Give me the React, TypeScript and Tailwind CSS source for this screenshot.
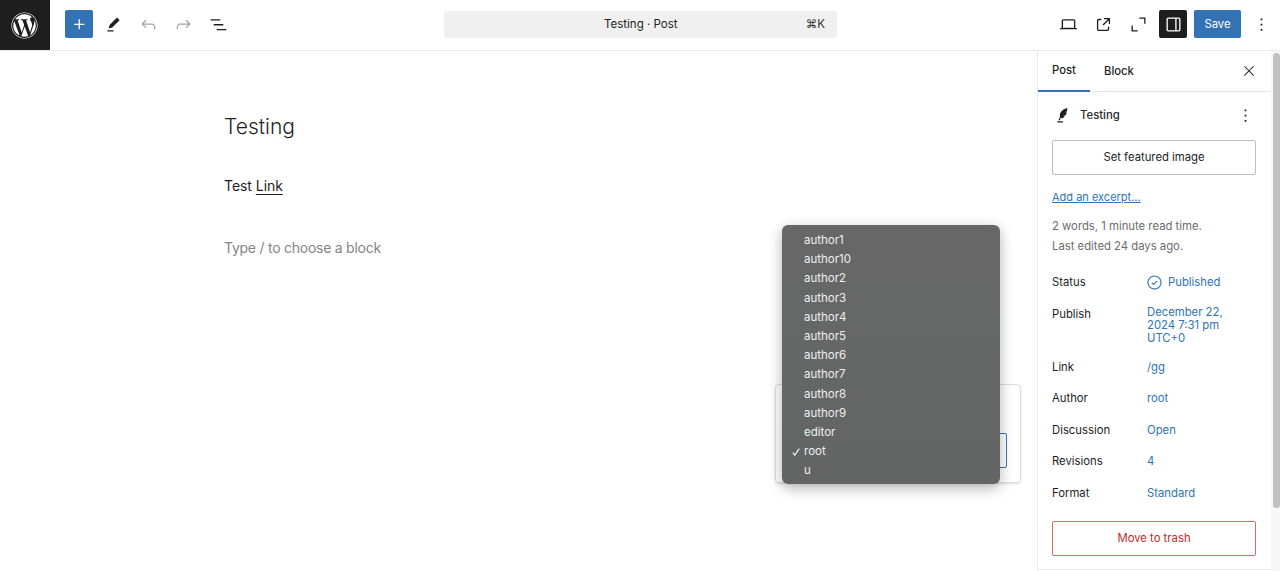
import React from "react";
import { FaWordpress } from "react-icons/fa";

const Icon = ({ d, className = "" }: { d: string; className?: string }) => (
  <svg viewBox="0 0 24 24" fill="currentColor" className={`h-[21px] w-[21px] shrink-0 ${className}`}>
    <path d={d} fillRule="evenodd" />
  </svg>
);

const P = {
  plus: "M11 12.5V17.5H12.5V12.5H17.5V11H12.5V6H11V11H6V12.5H11Z",
  edit: "m19 7-3-3-8.5 8.5-1 4 4-1L19 7Zm-7 11.5H5V20h7v-1.5Z",
  undo: "M18.3 11.7c-.6-.6-1.4-.9-2.3-.9H6.7l2.9-3.3-1.1-1-4.5 5L8.5 16l1-1-2.7-2.7H16c.5 0 .9.2 1.3.5 1 1 1 3.4 1 4.5v.3h1.5v-.2c0-1.5 0-4.3-1.5-5.7z",
  redo: "M15.6 6.5l-1.1 1 2.9 3.3H8c-.9 0-1.7.3-2.3.9-1.4 1.5-1.4 4.2-1.4 5.6v.2h1.5v-.3c0-1.1 0-3.5 1-4.5.3-.3.7-.5 1.3-.5h9.2L14.5 15l1.1 1.1 4.6-4.6-4.6-5z",
  list: "M3 6h11v1.5H3V6Zm3.5 5.5h11V13h-11v-1.5ZM21 17H10v1.5h11V17Z",
  desktop: "M20.5 16h-.7V8c0-1.1-.9-2-2-2H6.2c-1.1 0-2 .9-2 2v8h-.7c-.8 0-1.5.7-1.5 1.5h20c0-.8-.7-1.5-1.5-1.5zM5.7 8c0-.3.2-.5.5-.5h11.6c.3 0 .5.2.5.5v7.6H5.7V8z",
  external: "M19.5 4.5h-7V6h4.44l-5.97 5.97 1.06 1.06L18 7.06v4.44h1.5v-7Zm-13 1a2 2 0 0 0-2 2v10a2 2 0 0 0 2 2h10a2 2 0 0 0 2-2v-3H17v3a.5.5 0 0 1-.5.5h-10a.5.5 0 0 1-.5-.5v-10a.5.5 0 0 1 .5-.5h3V5.5h-3Z",
  full: "M13 5.5h5.5V11H20V4h-7v1.5Zm-2 13H5.5V13H4v7h7v-1.5Z",
  drawer: "M18 4H6c-1.1 0-2 .9-2 2v12c0 1.1.9 2 2 2h12c1.1 0 2-.9 2-2V6c0-1.1-.9-2-2-2zm-4 14.5H6c-.3 0-.5-.2-.5-.5V6c0-.3.2-.5.5-.5h8v13zm4.5-.5c0 .3-.2.5-.5.5h-2.5v-13H18c.3 0 .5.2.5.5v12z",
  more: "M13 19h-2v-2h2v2zm0-6h-2v-2h2v2zm0-6h-2V5h2v2z",
  close: "M13 11.8l6.1-6.3-1-1-6.1 6.2-6.1-6.2-1 1 6.1 6.3-6.5 6.7 1 1 6.5-6.6 6.5 6.6 1-1z",
  feather: "M17.5 3c-4 .8-7.5 2.8-9 5.8-.8 1.7-.9 3.6-.4 5L6 17.5h1.5l1.4-2.7c1.8.3 3.4-.4 4.6-1.8l-2-.3 3-1c.7-1.1 1.1-2.3 1.3-3.4l-1.8.2 2-1.4c.3-1.4.4-2.8.5-4.1ZM5 18.7h6.5v1.4H5v-1.4Z",
};

const authors = ["author1", "author10", "author2", "author3", "author4", "author5", "author6", "author7", "author8", "author9", "editor", "root", "u"];

const Row = ({ label, value }: { label: string; value: string }) => (
  <div className="flex h-[31.5px] items-center">
    <span className="w-[95px] text-[#1e1e1e]">{label}</span>
    <span className="text-[#2f74b3]">{value}</span>
  </div>
);

export default function App() {
  return (
    <div className="relative flex h-[571px] w-[1280px] flex-col overflow-hidden bg-white text-[11.3px] text-[#1e1e1e] font-['Inter',sans-serif]">
      <header className="flex h-[51px] shrink-0 items-center border-b border-[#e9e9e9] pb-[2px]">
        <div className="-mb-[2px] flex h-[50px] w-[50px] shrink-0 items-center justify-center self-start bg-[#1e1e1e] text-white">
          <FaWordpress size={27} className="-translate-x-px" />
        </div>
        <div className="ml-[15px] flex h-[28px] w-[28px] items-center justify-center rounded-[2px] bg-[#3373b4] text-white">
          <Icon d={P.plus} />
        </div>
        <div className="ml-[10px] flex items-center gap-[14px]">
          <Icon d={P.edit} />
          <Icon d={P.undo} className="text-[#a3a3a3]" />
          <Icon d={P.redo} className="text-[#a3a3a3]" />
          <Icon d={P.list} />
        </div>
        <div className="ml-[215px] flex h-[27px] w-[393px] items-center rounded-[3px] bg-[#f0f0f0] pl-[160px] pr-[12px] pt-[1px] text-[11.5px]">
          <span>Testing · Post</span>
          <span className="ml-auto text-[#333]">⌘K</span>
        </div>
        <div className="ml-auto flex items-center">
          <Icon d={P.desktop} />
          <Icon d={P.external} className="ml-[14px]" />
          <Icon d={P.full} className="ml-[14px]" />
          <div className="ml-[10px] flex h-[28px] w-[28px] items-center justify-center rounded-[2px] bg-[#1e1e1e] text-white">
            <Icon d={P.drawer} />
          </div>
          <div className="ml-[7px] flex h-[28px] w-[47px] items-center justify-center rounded-[2px] bg-[#3373b4] text-white">Save</div>
          <Icon d={P.more} className="ml-[10px] mr-[8px]" />
        </div>
      </header>

      <div className="flex min-h-0 flex-1">
        <main className="flex-1 pl-[224px] pt-[61px]">
          <h1 className="text-[21px] font-light leading-[30px] text-[#1e1e1e]">Testing</h1>
          <p className="mt-[32px] text-[14px] leading-[24px] tracking-[-0.05px]">
            Test <span className="underline underline-offset-[3px]">Link</span>
          </p>
          <p className="mt-[38px] text-[14px] leading-[24px] tracking-[-0.25px] text-[#858585]">Type / to choose a block</p>
        </main>

        <aside className="flex h-[519px] w-[234px] shrink-0 flex-col border-b border-l border-[#e9e9e9]">
          <div className="flex h-[41px] shrink-0 items-stretch border-b border-[#e4e4e4]">
            <div className="-mb-px flex w-[52px] items-center justify-center border-b-2 border-[#3373b4] font-medium">Post</div>
            <div className="ml-[14px] flex items-center font-medium">Block</div>
            <svg viewBox="0 0 24 24" fill="currentColor" className="ml-auto mr-[14px] mt-[12px] h-[16px] w-[16px]">
              <path d={P.close} />
            </svg>
          </div>
          <div className="flex flex-1 flex-col pl-[14px] pr-[15px]">
            <div className="flex h-[48px] items-center pb-[1px] font-medium">
              <Icon d={P.feather} className="ml-[1px] mt-[-1px]" />
              <span className="ml-[6px] text-[#2c2c2c]">Testing</span>
              <Icon d={P.more} className="ml-auto" />
            </div>
            <div className="flex h-[35px] items-center justify-center rounded-[2px] border border-[#bdbdbd] text-[#1e1e1e]">Set featured image</div>
            <div className="mt-[14px] text-[11px] text-[#2f74b3] underline">Add an excerpt...</div>
            <div className="mt-[10px] leading-[20px] text-[#6b6b6b]">
              <div>2 words, 1 minute read time.</div>
              <div>Last edited 24 days ago.</div>
            </div>
            <div className="mt-[17px] flex h-[20px] items-center">
              <span className="w-[95px]">Status</span>
              <svg viewBox="0 0 16 16" width="15" height="15" fill="none" stroke="#2f74b3" strokeWidth="1.2">
                <circle cx="8" cy="8" r="7" />
                <path d="M5.2 8.3l2 1.9 3.6-4" />
              </svg>
              <span className="ml-[6px] text-[#2f74b3]">Published</span>
            </div>
            <div className="mt-[13px] flex items-start leading-[13px]">
              <span className="w-[95px] pt-[2px]">Publish</span>
              <span className="w-[90px] text-[#2f74b3]">December 22, 2024 7:31 pm UTC+0</span>
            </div>
            <div className="mt-[7px]">
              <Row label="Link" value="/gg" />
              <Row label="Author" value="root" />
              <Row label="Discussion" value="Open" />
              <Row label="Revisions" value="4" />
              <Row label="Format" value="Standard" />
            </div>
            <div className="mt-[12px] flex h-[35px] items-center justify-center rounded-[2px] border-[1.5px] border-[#d96a6a] text-[#c22a2a]">Move to trash</div>
          </div>
        </aside>

        <div className="relative w-[9px] shrink-0 bg-[#f7f7f7]">
          <div className="absolute left-[2px] right-0 top-[2px] h-[455px] rounded-full bg-[#c1c1c1]"></div>
        </div>
      </div>

      {/* author popover underneath the native menu */}
      <div className="absolute left-[775px] top-[384px] h-[99px] w-[246px] rounded-[4px] border border-[#dcdcdc] bg-white shadow-sm">
        <div className="absolute left-[200px] top-[48px] h-[35px] w-[31px] rounded-[2px] border border-[#3373b4]"></div>
      </div>

      {/* native select menu */}
      <div className="absolute left-[782px] top-[225px] flex h-[259px] w-[218px] flex-col rounded-[6px] bg-gradient-to-b from-[#676767] to-[#636565] pb-[4px] pt-[6px] text-[11.5px] text-[#efefef] shadow-[0_4px_14px_rgba(0,0,0,0.3)]">
        {authors.map((a) => (
          <div key={a} className="relative h-[19.2px] pl-[22px] leading-[19.2px]">
            {a === "root" && (
              <svg viewBox="0 0 8 8" width="8" height="8" fill="none" stroke="#efefef" strokeWidth="1.2" className="absolute left-[10px] top-[6px]">
                <path d="M0.8 4.6L2.8 7.2L7.2 0.6" />
              </svg>
            )}
            {a}
          </div>
        ))}
      </div>
    </div>
  );
}
